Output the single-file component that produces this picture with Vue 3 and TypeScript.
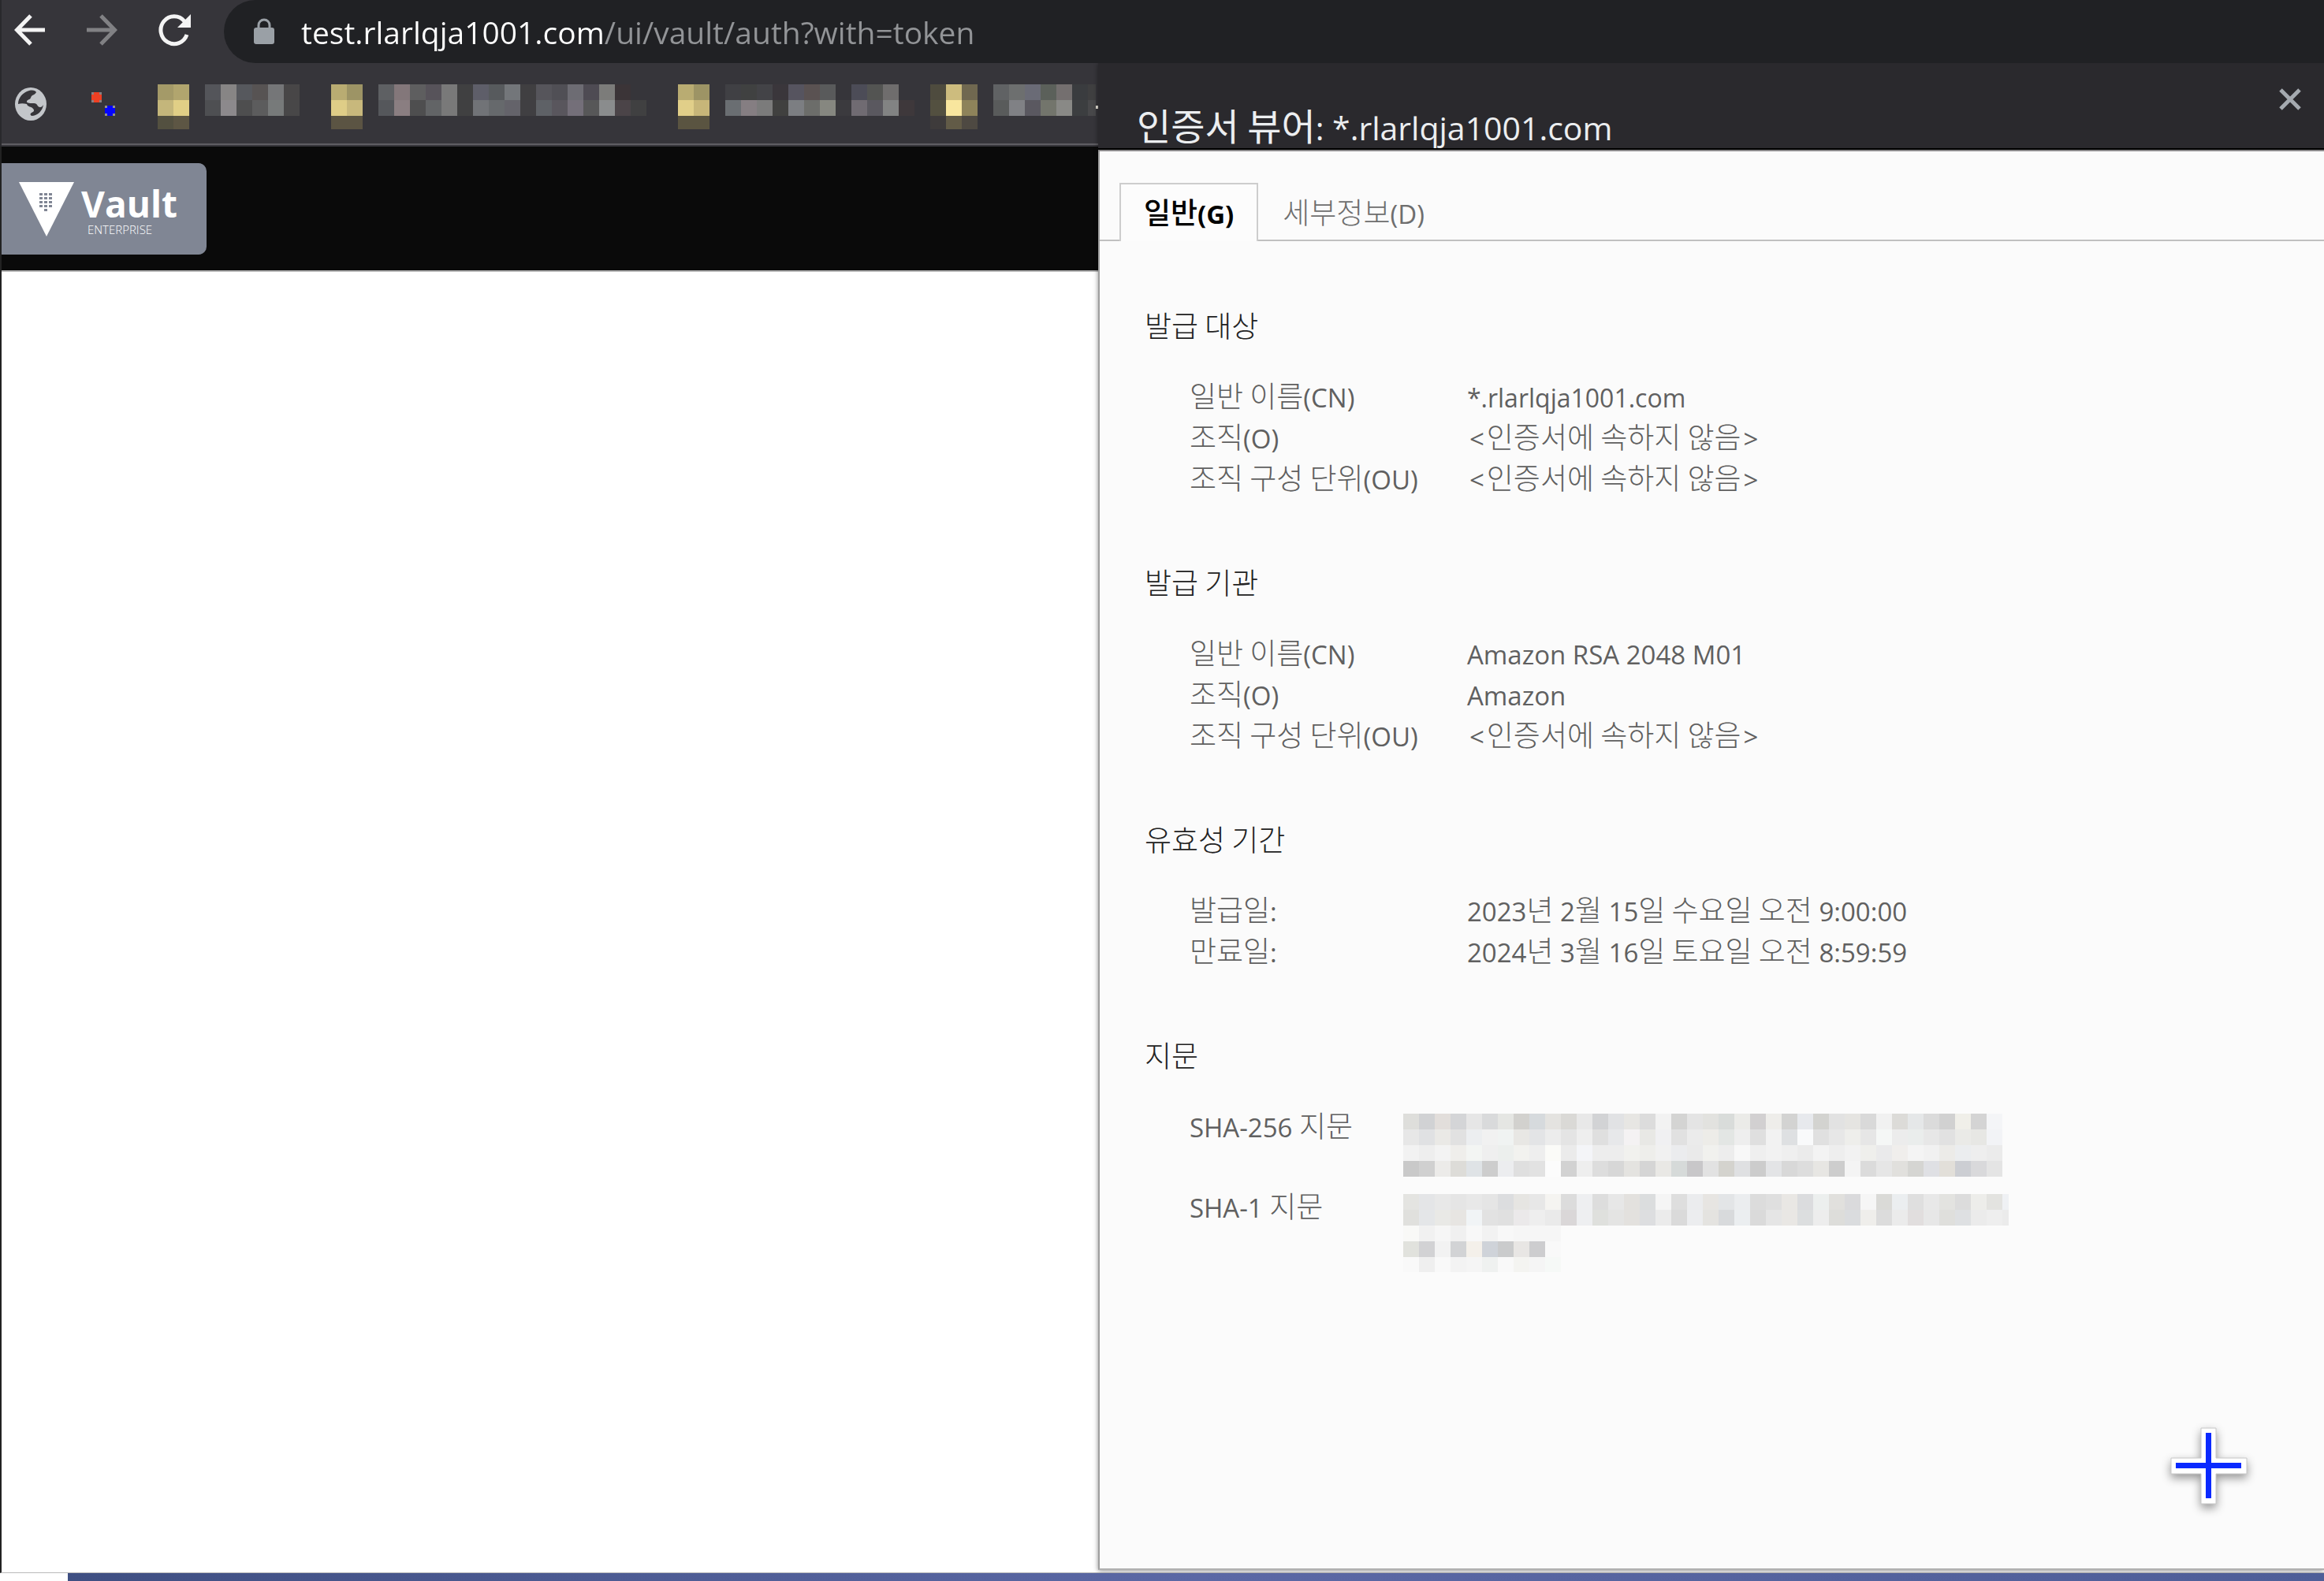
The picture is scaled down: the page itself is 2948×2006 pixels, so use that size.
<script setup lang="ts">
import { computed, ref } from 'vue'

interface Cell {
  x: number
  y: number
  fill: string
}
interface Field {
  label: string
  value: string
}
interface Section {
  title: string
  fields: Field[]
}
interface Run {
  text: string
  kind: string
}

const CELL = 20
const address = ref('test.rlarlqja1001.com/ui/vault/auth?with=token')
const activeTab = ref(0)

const tabs = ['일반(G)', '세부정보(D)']
const title = '인증서 뷰어: *.rlarlqja1001.com'
const missing = '<인증서에 속하지 않음>'

const sections: Section[] = [
  {
    title: '발급 대상',
    fields: [
      { label: '일반 이름(CN)', value: '*.rlarlqja1001.com' },
      { label: '조직(O)', value: missing },
      { label: '조직 구성 단위(OU)', value: missing },
    ],
  },
  {
    title: '발급 기관',
    fields: [
      { label: '일반 이름(CN)', value: 'Amazon RSA 2048 M01' },
      { label: '조직(O)', value: 'Amazon' },
      { label: '조직 구성 단위(OU)', value: missing },
    ],
  },
  {
    title: '유효성 기간',
    fields: [
      { label: '발급일:', value: '2023년 2월 15일 수요일 오전 9:00:00' },
      { label: '만료일:', value: '2024년 3월 16일 토요일 오전 8:59:59' },
    ],
  },
]

/* Hangul, Latin, host names and angle brackets are each styled on their own. */
function kindOf(part: string): string {
  if (/[가-힣]/.test(part)) return 'hangul'
  if (/^[<>]$/.test(part)) return 'latin angle'
  if (/\.com$/.test(part)) return 'latin host'
  return 'latin'
}

function runs(text: string): Run[] {
  const parts = text.match(/[가-힣]+(?: +[가-힣]+)*|[^가-힣]+/g) ?? []
  return parts.map((part) => ({ text: part, kind: kindOf(part) }))
}

/* Each row lists cell colours from left to right; a dot is an empty cell. */
function mosaic(rows: string[]): Cell[] {
  return rows.flatMap((row, r) =>
    row
      .split(' ')
      .map((fill, c) => ({ x: c * CELL, y: r * CELL, fill }))
      .filter((cell) => cell.fill !== '.')
      .map((cell) => ({ ...cell, fill: '#' + cell.fill })),
  )
}

const bookmarkCells = computed(() =>
  mosaic([
    'a49a68 b1a56e . 54555a 878585 56585d 575353 757678 484647 . . b9ac72 9d9465 . 5e6063 83777a 5e5e5f 57535a 797979 404041 5e5e69 575a5d 73767a 403f41 56555b 504f55 6d6c73 4e4b53 7c7c7a 3b3437 . . . b9ac72 9d9465 . 404044 404141 434347 3a363b 56545f 5a5252 595a5b . 4c4c57 535452 6f6d6d . . 4e4b3e cdbc7e 706850 . 606264 6d6f6f 6a6b76 5b605a 746f6f 3a3c3f 3f3f40',
    'c4b67b e1cf86 . 4e4f52 8c898c 4e4e4f 5c5c5d 777a7a 484748 . . dfcd87 c8b87c . 55575b 8a7e81 4e4e4f 626466 797979 404041 717377 66696c 64636a 403f42 5e6166 59565d 746f79 575758 8a8c8d 4b4448 404041 . . e1cf89 c7b679 . 6a6e72 857e82 7b7b7b 40403f 7c7e82 6c6d6a 868780 3b3a3e 706b72 5a585f 828383 3e383b . 535040 f8e69e 8e835a . 595b5b 808185 5a5860 73756c 898986 3c3e40 48484a',
    '535040 5d5644 . . . . . . . . . 5b5443 5b5443 . . . . . . . . . . . . . . . . . . . . 5a5441 5a5441 . . . . . . . . . . . . . . 3e3b3b 625b47 4e4942',
  ]),
)

const sha256Cells = computed(() =>
  mosaic([
    'dededb d1d2d4 e2dedb d4d5d7 e6e6e6 d9dadb e5e6e3 d2d1ce d6dadd e4e3e0 dad9d6 e8e8e8 d2d3d5 e1e2e4 e7e6e3 dcdcdc f2f2f2 d4d4d3 e4e4e4 e2e2df d9dcda ebebe8 d2d0d1 eeedea d3d3d2 e7e9ed d3d3d0 e2e2e2 e5e4e1 d9d9d9 f1f1f1 dcdbd8 e5e7e8 dbdbdb d1d1d1 f0efe9 d4d4d4 f4f5f7',
    'e7e7e7 e0e1e3 eae9e6 e1e1e1 eceef0 f1f1f1 f0f3f2 e8e7e4 e3e4e6 ececec e4e4e4 eeeeee dfdfdf e7e8ea f4f2f3 e8e8e5 f0f0f2 e1e1e1 ebebeb edece8 e3e6e4 eeeeee dfdfdf f2f2f2 dee0e2 f9fafb e0e0e0 e7e7e7 eeeeeb e6e6e6 f5f7f6 ececec eaedec e7e7e7 e1e1e1 eaeae7 e7e7e4 f2f3f6',
    'f2f2f2 eeeeee f3f3f3 efeeeb f3f5f3 efefef ecefed f2f2ef eeeeee fbfbf8 ebebeb f4f5f8 ededed ededed f1f1ee eeeeeb f1f1f1 ebecee eaeaea f1f1ee ededed f8f8f8 efefef f2f2f2 efefef ebebeb f3f3f3 eeeeee f2f2f2 efefec eaeaeb f0eeec f4f4f4 f1f1f1 ecebe8 ebedef eeeeee ebebeb',
    'c9c9c9 d0d0d0 ecebe9 dddcd8 dfe3e6 cdcdcd ecedef dfdfdf e2e2e2 fcfcfc d2d2d2 eeeeee dddddd d7d7d7 e4e3e0 d5d5d5 e9e8e5 d6dad9 c8c7c9 e2e2e2 d4d3ce dfe0e2 cccccc e3e4e6 d8d8d8 dddddd e7e6e3 cdcdcd f4f4f4 dbdbdb e6e6e6 e1e0dd d5d5d2 dfe0e4 e2dfd9 ccced3 d9d9db e4e4e4',
  ]),
)

const sha1Cells = computed(() =>
  mosaic([
    'e4e4e1 e4e5e7 e8e8e8 e5e5e5 e8e8e8 e5e5e5 dcdddf e6e5e2 e7e7e7 f5f4f1 dcdcdc eeeff1 dddddd e7e7e7 e3e1de dbddde f5f5f5 dedede ebecee e7e5e2 e3e5e7 ebedef dcdcdc dfdfdf e9e7e4 dbdcde ecefee e1e0dd dadadc f6f6f6 dadad7 ebeef0 dfdfdf e8e8e8 e3e3e0 dcdcdc ededea e3e3e0 eff1f4',
    'e0e0dd e4e6e8 e9e9e6 e7e5e2 f1f4f6 e2e2e2 e0e0e0 ebe9ea eeeeee eaeaea dad7d8 eeeff1 dfe0dd e4e4e3 e3e1de dddee0 ebebeb dadada ecedef e4e3e0 d8dadc ebeef0 dadada e5e5e5 e9e7e4 dcdedf ededed ddddda dadcde efeeeb dcdcdc ebebeb e1dede e7e7e7 dfdfdc dee0e2 ebebeb eeeeee ebebeb',
    'f9f9f7 f1f1f1 f6f6f6 f0f0f0 f8f8f8 f2f2f2 f8f8f8 f6f6f6 f6f6f6 f6f6f6',
    'e1e2dd d2d2d4 f2f2f2 d2d3d5 f4f0ea cfd3d9 cacbcc e8e6e4 cdcdcf f9f9f9',
    'f9f9f9 efefef f9f9f9 f3f3f3 f5f5f5 eff1f0 f9f9f9 f4f4f1 f5f5f5 f6f9f7',
  ]),
)

const keypad = [0, 1, 2, 3].flatMap((r) => [0, 1, 2].map((c) => ({ x: 26 + c * 6, y: 14 + r * 5 })))
</script>

<template>
  <div class="window">
    <header class="chrome">
      <div class="nav">
        <button class="icon-button" type="button" aria-label="뒤로">
          <svg width="40" height="40" viewBox="0 0 40 40" fill="none" stroke="#f4f4f4" stroke-width="5">
            <path d="M39 20H4M21 2 3.500 20 21 38" />
          </svg>
        </button>
        <button class="icon-button" type="button" aria-label="앞으로">
          <svg width="40" height="40" viewBox="0 0 40 40" fill="none" stroke="#818184" stroke-width="5">
            <path d="M1 20h35M19 2l17.500 18L19 38" />
          </svg>
        </button>
        <button class="icon-button reload" type="button" aria-label="새로고침">
          <svg width="44" height="42" viewBox="0 0 44 42">
            <path d="M37 27A17 17.500 0 1 1 34 10" fill="none" stroke="#f4f4f4" stroke-width="5" />
            <path d="M42 1v17H25z" fill="#f4f4f4" />
          </svg>
        </button>
        <form class="omnibox" @submit.prevent>
          <svg class="lock" width="28" height="34" viewBox="0 0 28 34">
            <path d="M7 14V9a7 7 0 0 1 14 0v5" fill="none" stroke="#9aa0a6" stroke-width="3" />
            <rect x="1" y="12" width="26" height="21" rx="3" fill="#9aa0a6" />
          </svg>
          <input v-model="address" class="address" type="text" aria-label="주소" spellcheck="false" />
        </form>
      </div>
      <div class="bookmarks">
        <button class="icon-button globe" type="button" aria-label="웹">
          <svg width="42" height="44" viewBox="0 0 42 44">
            <ellipse cx="21" cy="22" rx="20" ry="21" fill="#c3c6ca" />
            <path
              d="M19 5c5-1 8 0 9 2-2 4-6 3-7 7-1 3-5 2-5 5 0 2 5 2 9 2 5 0 4 5 8 5 2 0 3-2 4-3-1 7-7 14-15 14-2-1-2-3 0-4 3-1 4-3 2-5-2-3-7-2-8-6-4-1-8-1-11 0 0-8 6-15 14-17z"
              fill="#36353a"
            />
          </svg>
        </button>
        <svg class="dots" width="30" height="30" viewBox="0 0 30 30">
          <rect width="13" height="13" fill="#8a7f80" />
          <path d="M3 0h7v3h3v7h-3v3H3v-3H0V3h3z" fill="#ee4023" />
          <rect x="17" y="17" width="13" height="13" fill="#8f8f8a" />
          <path d="M20 17h7v3h3v7h-3v3h-7v-3h-3v-7h3z" fill="#0404ff" />
        </svg>
        <svg class="mosaic" width="1190" height="57" viewBox="0 0 1190 57">
          <rect
            v-for="(cell, i) in bookmarkCells"
            :key="i"
            :x="cell.x"
            :y="cell.y"
            width="20"
            height="20"
            :fill="cell.fill"
          />
        </svg>
        <span class="speck"></span>
      </div>
    </header>

    <main class="page">
      <div class="vault-bar">
        <a class="vault-home" href="#">
          <svg width="70" height="70" viewBox="0 0 70 70">
            <path d="M0 0h70L35 69z" fill="#fff" />
            <rect v-for="(k, i) in keypad" :key="i" :x="k.x" :y="k.y" width="4" height="3" fill="#808694" />
            <rect x="32" y="34" width="4" height="3" fill="#808694" />
          </svg>
          <span class="vault-name">
            <span class="vault-word">Vault</span>
            <span class="vault-edition">ENTERPRISE</span>
          </span>
        </a>
      </div>
    </main>
    <div class="desktop"></div>

    <section class="dialog" role="dialog" :aria-label="title">
      <header class="dialog-head">
        <h1>
          <span v-for="(run, i) in runs(title)" :key="i" :class="run.kind">{{ run.text }}</span>
        </h1>
        <button class="icon-button close" type="button" aria-label="닫기">
          <svg width="28" height="28" viewBox="0 0 28 28" stroke="#a5aab0" stroke-width="5">
            <path d="M2 2l24 24M26 2 2 26" />
          </svg>
        </button>
      </header>
      <div class="tabs" role="tablist">
        <button
          v-for="(tab, i) in tabs"
          :key="tab"
          class="tab"
          :class="{ active: activeTab === i }"
          type="button"
          role="tab"
          :aria-selected="activeTab === i"
          @click="activeTab = i"
        >
          <span v-for="(run, r) in runs(tab)" :key="r" :class="run.kind">{{ run.text }}</span>
        </button>
      </div>
      <div class="panel" role="tabpanel">
        <section v-for="section in sections" :key="section.title" class="group">
          <h2>{{ section.title }}</h2>
          <dl>
            <template v-for="field in section.fields" :key="field.label">
              <dt>
                <span v-for="(run, r) in runs(field.label)" :key="r" :class="run.kind">{{ run.text }}</span>
              </dt>
              <dd>
                <span v-for="(run, r) in runs(field.value)" :key="r" :class="run.kind">{{ run.text }}</span>
              </dd>
            </template>
          </dl>
        </section>
        <section class="group">
          <h2>지문</h2>
          <dl class="prints">
            <dt><span class="latin">SHA-256 </span>지문</dt>
            <dd>
              <svg class="mosaic" width="768" height="80" viewBox="0 0 768 80">
                <rect v-for="(c, i) in sha256Cells" :key="i" :x="c.x" :y="c.y" width="20" height="20" :fill="c.fill" />
              </svg>
            </dd>
            <dt><span class="latin">SHA-1 </span>지문</dt>
            <dd>
              <svg class="mosaic" width="768" height="99" viewBox="0 0 768 99">
                <rect v-for="(c, i) in sha1Cells" :key="i" :x="c.x" :y="c.y" width="20" height="20" :fill="c.fill" />
              </svg>
            </dd>
          </dl>
        </section>
      </div>
      <svg class="crosshair" width="98" height="98" viewBox="0 0 98 98">
        <path d="M39 1h19v38h39v20H58v38H39V59H1V39h38z" fill="#fff" stroke="#c8c8c8" />
        <path d="M45 7h7v38h38v7H52v38h-7V52H7v-7h38z" fill="#0a29ff" />
      </svg>
    </section>
  </div>
</template>

<style>
body {
  margin: 0;
  background: #fff;
}
</style>

<style scoped>
* {
  box-sizing: border-box;
}
.window {
  position: relative;
  display: flex;
  flex-direction: column;
  min-height: 100vh;
  overflow: hidden;
  font-family: "Noto Sans CJK KR", "Noto Sans", sans-serif;
  font-size: 37px;
  font-weight: 300;
}
.latin {
  font-family: "Open Sans", "Noto Sans", sans-serif;
  font-size: 33px;
  font-weight: 400;
  white-space: pre;
}
.host {
  font-size: 32px;
}
.angle {
  padding: 0 3px;
}
svg {
  display: block;
  flex: none;
}
.mosaic {
  shape-rendering: crispEdges;
}
.icon-button {
  padding: 0;
  border: 0;
  background: none;
}
.chrome {
  border-left: 2px solid #29292c;
  background: #36353a;
}
.nav {
  display: flex;
  align-items: center;
  gap: 51px;
  height: 80px;
  padding-left: 16px;
}
.nav .icon-button {
  margin-bottom: 4px;
}
.omnibox {
  display: flex;
  flex: 1;
  align-items: center;
  gap: 33px;
  height: 80px;
  margin-left: -11px;
  padding-left: 37px;
  border-radius: 40px 0 0 40px;
  background: #202124;
}
.address {
  flex: 1;
  height: 60px;
  padding: 0;
  border: 0;
  outline: 0;
  background: linear-gradient(to right, #fff 385px, #929497 385px);
  background-clip: text;
  -webkit-background-clip: text;
  color: transparent;
  font: 400 39px "Open Sans", "Noto Sans", sans-serif;
}
.bookmarks {
  display: flex;
  height: 106px;
  padding: 27px 0 0 16px;
  border-bottom: 2px solid #36353a;
  box-shadow: inset 0 -2px #5f5e63;
}
.globe {
  align-self: flex-start;
  margin-top: 3px;
}
.dots {
  margin: 10px 54px 0 56px;
}
.speck {
  width: 4px;
  height: 4px;
  margin-top: 27px;
  background: #e4e0d6;
}
.page {
  flex: 1;
  border-left: 2px solid #222;
  border-bottom: 1px solid #bbb;
  background: #fff;
}
.vault-bar {
  display: flex;
  align-items: center;
  height: 159px;
  border-bottom: 2px solid #b8b8b8;
  background: #0a0a0a;
}
.vault-home {
  display: flex;
  gap: 9px;
  width: 260px;
  height: 116px;
  padding: 24px 0 0 22px;
  border-radius: 0 10px 10px 0;
  background: #808694;
  color: #fff;
  text-decoration: none;
}
.vault-name {
  display: flex;
  flex-direction: column;
  font-family: "Open Sans", sans-serif;
}
.vault-word {
  font-size: 46px;
  font-weight: 700;
  line-height: 54px;
}
.vault-edition {
  padding-left: 8px;
  font-size: 15px;
  line-height: 12px;
}
.desktop {
  height: 10px;
  margin-left: 86px;
  background: linear-gradient(to right, #3f4f82, #5b68a5 50%, #4e5e98);
}
.dialog {
  position: absolute;
  top: 80px;
  right: 0;
  bottom: 14px;
  left: 47.25%;
  border-left: 2px solid #9f9f9f;
  border-bottom: 2px solid #b0b0b0;
  background: #fbfbfb;
  box-shadow: 0 1px 6px rgba(0, 0, 0, 0.45);
  clip-path: inset(0 0 -4px -8px);
}
.dialog-head {
  display: flex;
  align-items: flex-end;
  justify-content: space-between;
  height: 112px;
  margin-left: -2px;
  padding: 0 29px 0 49px;
  border-bottom: 2px solid #8c8a8c;
  background: #2a292d;
  box-shadow: inset 0 -2px #000;
}
.dialog-head h1 {
  margin: 0;
  color: #eceef0;
  font-size: 47px;
  font-weight: 400;
  line-height: 56px;
}
.dialog-head .latin {
  font-size: 41px;
}
.close {
  margin-bottom: 50px;
}
.tabs {
  display: flex;
  height: 114px;
  padding: 40px 0 0 25px;
  box-shadow: inset 0 -2px #c0c0c0;
}
.tab {
  height: 74px;
  padding: 0 29px 5px;
  border: 2px solid transparent;
  border-bottom: 0;
  background: none;
  color: #6e6e6e;
  font: inherit;
}
.tab.active {
  border-color: #cdcdcd;
  background: #fcfcfc;
  color: #000;
  font-weight: 500;
}
.tab.active .latin {
  font-weight: 700;
}
.panel {
  padding: 80px 0 0 57px;
}
.group {
  margin-bottom: 81px;
}
.group h2 {
  margin: 0 0 37px;
  color: #222;
  font-size: 37px;
  font-weight: 300;
  line-height: 52px;
}
dl {
  display: grid;
  grid-template-columns: 352px 1fr;
  margin: 0;
  padding-left: 57px;
  color: #606060;
  line-height: 52px;
}
dt,
dd {
  height: 52px;
  margin: 0;
}
.prints {
  grid-template-columns: 271px 1fr;
}
.prints dt,
.prints dd {
  height: 102px;
}
.prints .mosaic {
  margin-top: 12px;
}
.crosshair {
  position: absolute;
  right: 97px;
  bottom: 81px;
  overflow: visible;
  filter: drop-shadow(0 5px 6px rgba(0, 0, 0, 0.4));
}
</style>
